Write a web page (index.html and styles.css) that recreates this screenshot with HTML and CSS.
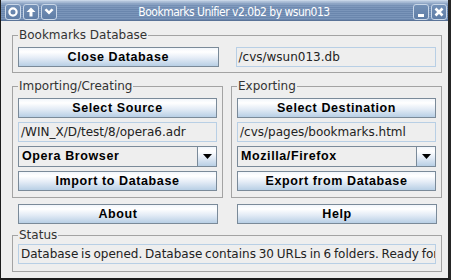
FILE: index.html
```html
<!DOCTYPE html>
<html>
<head>
<meta charset="utf-8">
<link rel="stylesheet" href="styles.css">
</head>
<body>
<div class="window">
  <div class="titlebar">
    <div class="tb-group">
      <span class="tb-btn"><svg width="14" height="14" viewBox="0 0 14 14"><circle cx="7" cy="7" r="3.6" fill="none" stroke="#fff" stroke-width="2.2"/></svg></span>
      <span class="tb-btn"><svg width="14" height="14" viewBox="0 0 14 14"><path d="M7 2.5 L11.5 7 H8.5 V11.5 H5.5 V7 H2.5 Z" fill="#fff"/></svg></span>
      <span class="tb-btn"><svg width="14" height="14" viewBox="0 0 14 14"><path d="M2.5 5 L4.5 3.5 L7 6 L9.5 3.5 L11.5 5 L7 9.5 Z" fill="#fff"/></svg></span>
    </div>
    <div class="title">Bookmarks Unifier v2.0b2 by wsun013</div>
    <div class="tb-group">
      <span class="tb-btn"><svg width="14" height="14" viewBox="0 0 14 14"><rect x="4" y="9" width="6" height="3" fill="#fff"/></svg></span>
      <span class="tb-btn"><svg width="14" height="14" viewBox="0 0 14 14"><path d="M3.5 3.5 L10.5 10.5 M10.5 3.5 L3.5 10.5" stroke="#fff" stroke-width="2.6"/></svg></span>
    </div>
  </div>
  <div class="content">
    <fieldset class="group group-db">
      <legend>Bookmarks Database</legend>
      <div class="pair">
        <button class="btn">Close Database</button>
        <div class="field">/cvs/wsun013.db</div>
      </div>
    </fieldset>
    <div class="cols">
      <fieldset class="group group-col">
        <legend>Importing/Creating</legend>
        <div class="stack">
          <button class="btn">Select Source</button>
          <div class="field">/WIN_X/D/test/8/opera6.adr</div>
          <div class="combo"><span class="combo-text">Opera Browser</span><span class="combo-arrow"><svg width="9" height="5" viewBox="0 0 9 5"><path d="M0 0 H9 L4.5 5 Z" fill="#000"/></svg></span></div>
          <button class="btn">Import to Database</button>
        </div>
      </fieldset>
      <fieldset class="group group-col">
        <legend>Exporting</legend>
        <div class="stack">
          <button class="btn">Select Destination</button>
          <div class="field">/cvs/pages/bookmarks.html</div>
          <div class="combo"><span class="combo-text">Mozilla/Firefox</span><span class="combo-arrow"><svg width="9" height="5" viewBox="0 0 9 5"><path d="M0 0 H9 L4.5 5 Z" fill="#000"/></svg></span></div>
          <button class="btn">Export from Database</button>
        </div>
      </fieldset>
    </div>
    <div class="cols actions">
      <button class="btn">About</button>
      <button class="btn">Help</button>
    </div>
    <fieldset class="group group-status">
      <legend>Status</legend>
      <div class="field status">Database is opened. Database contains 30 URLs in 6 folders. Ready for export.</div>
    </fieldset>
  </div>
</div>
</body>
</html>
```
FILE: styles.css
```css
* { box-sizing: border-box; }
html, body { margin: 0; padding: 0; background: #eeeeee; }
.window {
  width: 451px;
  height: 280px;
  background: #eeeeee;
  border-left: 1px solid #1c1c1c;
  border-right: 3px solid #262626;
  border-bottom: 2px solid #1c1c1c;
  display: flex;
  flex-direction: column;
  overflow: hidden;
  font-family: "DejaVu Sans", sans-serif;
  font-size: 12px;
  color: #222;
}
.titlebar {
  height: 21px;
  flex: none;
  display: flex;
  align-items: flex-start;
  padding: 4px 1px 0 4px;
  background:
    linear-gradient(to bottom, rgba(214,226,240,0.95) 0px, rgba(190,206,226,0.7) 2px, rgba(150,172,202,0.3) 5px, rgba(120,146,182,0) 9px),
    repeating-linear-gradient(to bottom, #7a95ba 0px, #7a95ba 1px, #6a86ad 1px, #6a86ad 2px);
  border-bottom: 1px solid #5a7398;
}
.tb-group { display: flex; gap: 2px; }
.tb-btn {
  width: 16px;
  height: 16px;
  border: 1px solid #c9d7e8;
  border-radius: 3px;
  background: linear-gradient(#7390b6, #5f7da6);
  display: flex;
  align-items: center;
  justify-content: center;
}
.title {
  flex: 1;
  text-align: center;
  color: #ffffff;
  font-family: "Liberation Sans Narrow", "DejaVu Sans Condensed", "DejaVu Sans", sans-serif;
  font-stretch: condensed;
  font-size: 12px;
  letter-spacing: -0.5px;
  line-height: 16px;
  padding-right: 2px;
}
.content {
  flex: 1;
  padding: 7px 6px 0 11px;
  display: flex;
  flex-direction: column;
}
.group {
  margin: 0;
  border: 1px solid #a3a3a3;
  padding: 5px 5px 5px 5px;
  min-width: 0;
}
.group legend {
  padding: 0 1px;
  margin-left: 0;
  line-height: 14px;
  font-size: 12px;
  color: #333;
}
.pair {
  display: grid;
  grid-template-columns: 1fr 1fr;
  column-gap: 17px;
}
.cols {
  display: grid;
  grid-template-columns: 1fr 1fr;
  column-gap: 8px;
  margin-top: 6px;
}
.group-col { padding-bottom: 6px; }
.stack {
  display: flex;
  flex-direction: column;
  gap: 4px;
}
.btn {
  height: 20px;
  margin: 0;
  padding: 0;
  border: 1px solid #7a8a99;
  background: linear-gradient(to bottom, #f2f6fb 0%, #ffffff 22%, #e4ecf6 55%, #b8cfe5 100%);
  font-family: "Liberation Sans", "DejaVu Sans", sans-serif;
  font-weight: bold;
  font-size: 12.5px;
  letter-spacing: 0.6px;
  color: #000;
  line-height: 18px;
}
.field {
  height: 20px;
  border: 1px solid #b8cfe5;
  background: #eeeeee;
  padding: 0 2px;
  line-height: 18px;
  font-size: 12px;
  color: #222;
  white-space: nowrap;
  overflow: hidden;
}
.combo {
  height: 21px;
  border: 1px solid #7a8a99;
  background: #eeeeee;
  display: flex;
}
.combo-text {
  flex: 1;
  padding-left: 3px;
  font-family: "Liberation Sans", "DejaVu Sans", sans-serif;
  font-weight: bold;
  font-size: 12.5px;
  letter-spacing: 0.6px;
  line-height: 19px;
  color: #000;
}
.combo-arrow {
  width: 19px;
  border-left: 1px solid #7a8a99;
  background: linear-gradient(to bottom, #f2f6fb 0%, #ffffff 22%, #e4ecf6 55%, #b8cfe5 100%);
  display: flex;
  align-items: center;
  justify-content: center;
}
.actions {
  margin-top: 6px;
  padding: 0 0 0 6px;
  column-gap: 19px;
  padding-right: 5px;
}
.group-status {
  margin-top: 4px;
  padding: 2px 5px 7px 5px;
}
.status { width: 100%; word-spacing: -1px; }
```
